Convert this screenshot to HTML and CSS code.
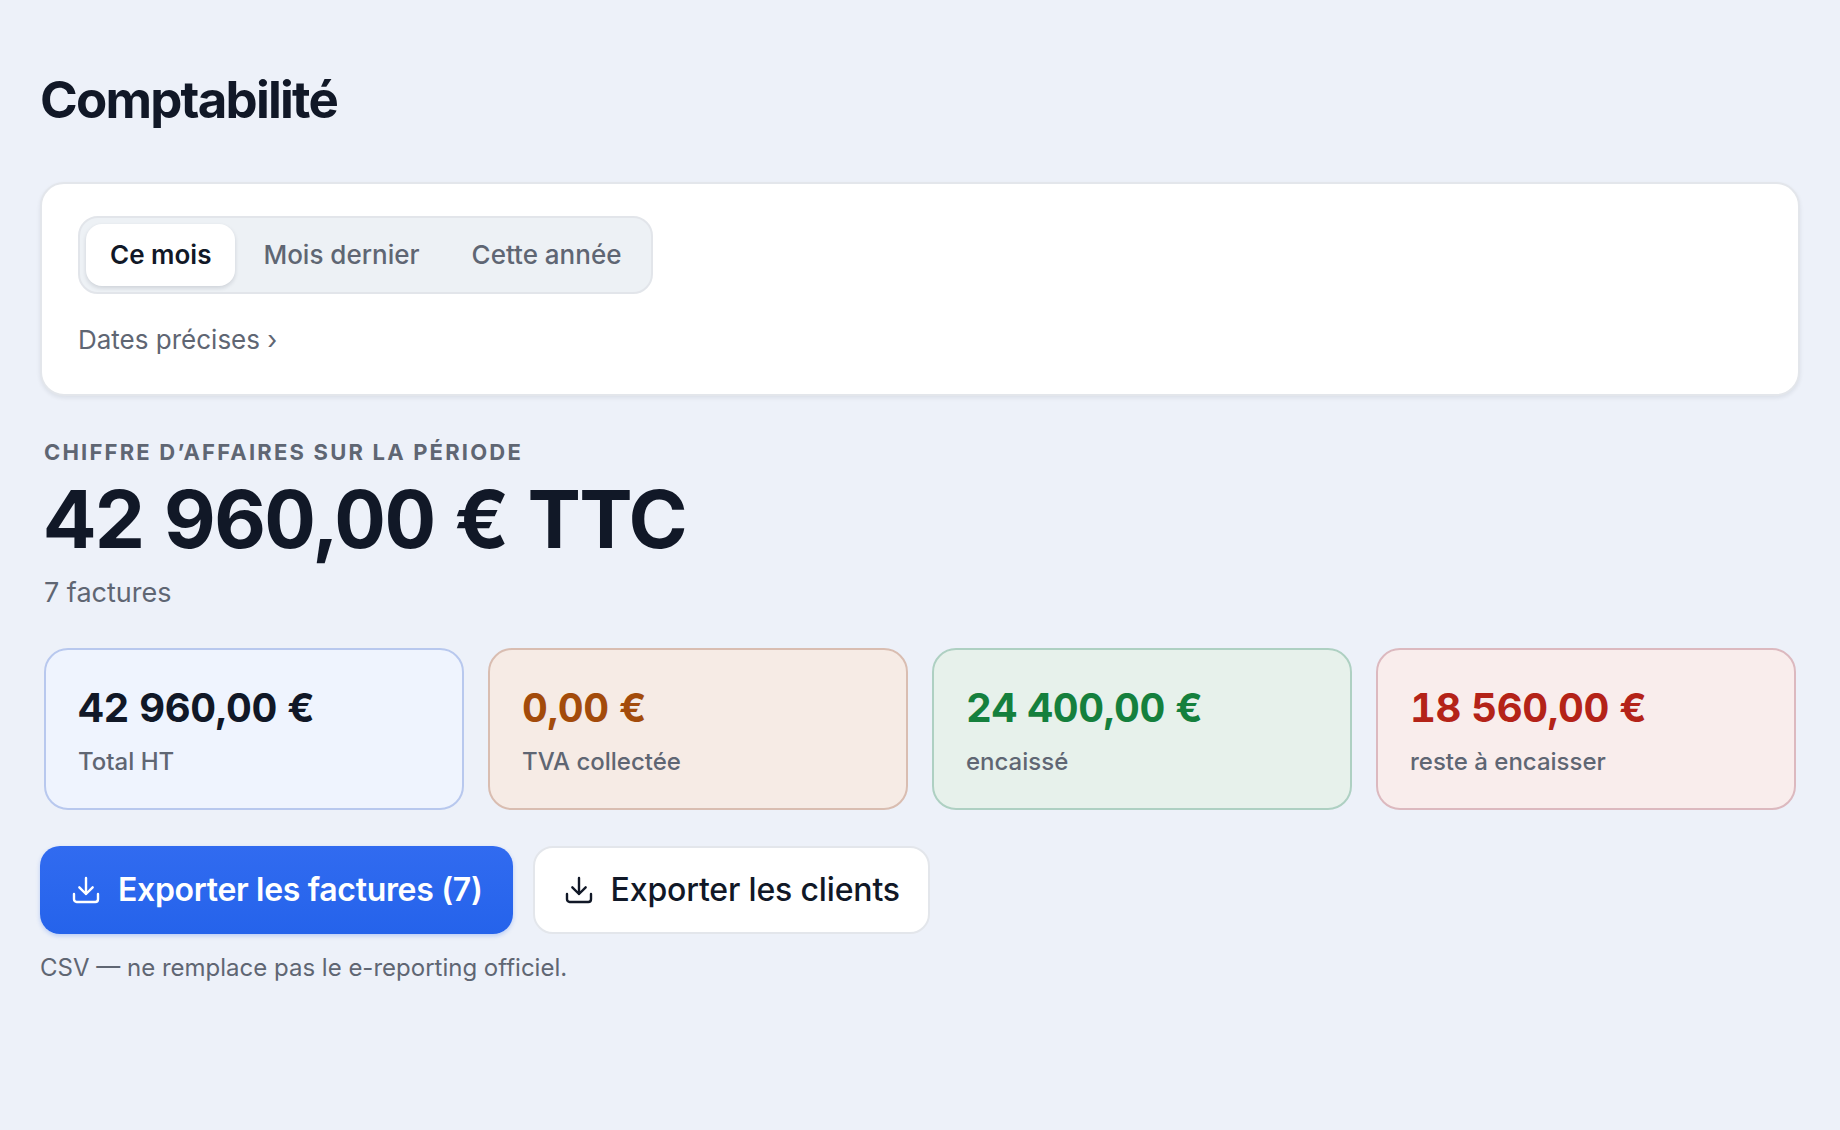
FILE: index.html
```html
<!DOCTYPE html>
<html lang="fr">
<head>
  <meta charset="UTF-8">
  <meta name="viewport" content="width=device-width, initial-scale=1">
  <title>Comptabilité</title>
  <link rel="stylesheet" href="styles.css">
</head>
<body>
  <main class="page">
    <h1>Comptabilité</h1>

    <!-- Période -->
    <section class="period-card">
      <div class="segmented">
        <button type="button" class="segment active" aria-pressed="true">Ce mois</button>
        <button type="button" class="segment" aria-pressed="false">Mois dernier</button>
        <button type="button" class="segment" aria-pressed="false">Cette année</button>
      </div>
      <button type="button" class="dates-toggle">Dates précises ›</button>
    </section>

    <!-- Chiffre d'affaires -->
    <section class="summary">
      <h2>Chiffre d’affaires sur la période</h2>
      <p class="total">42 960,00 € TTC</p>
      <p class="count">7 factures</p>
      <div class="stats">
        <div class="stat stat-ht">
          <p class="stat-value">42 960,00 €</p>
          <p class="stat-label">Total HT</p>
        </div>
        <div class="stat stat-tva">
          <p class="stat-value">0,00 €</p>
          <p class="stat-label">TVA collectée</p>
        </div>
        <div class="stat stat-paid">
          <p class="stat-value">24 400,00 €</p>
          <p class="stat-label">encaissé</p>
        </div>
        <div class="stat stat-due">
          <p class="stat-value">18 560,00 €</p>
          <p class="stat-label">reste à encaisser</p>
        </div>
      </div>
    </section>

    <!-- Exports -->
    <div class="actions">
      <button type="button" class="btn btn-primary">
        <svg class="icon" viewBox="0 0 24 24" aria-hidden="true"><path d="M12 3v12M7 10l5 5 5-5M21 15v4a2 2 0 0 1-2 2H5a2 2 0 0 1-2-2v-4"/></svg>
        Exporter les factures (7)
      </button>
      <button type="button" class="btn btn-secondary">
        <svg class="icon" viewBox="0 0 24 24" aria-hidden="true"><path d="M12 3v12M7 10l5 5 5-5M21 15v4a2 2 0 0 1-2 2H5a2 2 0 0 1-2-2v-4"/></svg>
        Exporter les clients
      </button>
    </div>
    <p class="note">CSV — ne remplace pas le e-reporting officiel.</p>
  </main>
</body>
</html>
```
FILE: styles.css
```css
* {
  margin: 0;
  padding: 0;
  box-sizing: border-box;
}

body {
  font-family: Inter, sans-serif;
  color: #111827;
  background: #edf1f9;
}

button {
  font: inherit;
  cursor: pointer;
}

.page {
  padding: 68px 40px;
}

h1 {
  font-size: 51px;
  line-height: 64px;
  font-weight: 700;
  letter-spacing: -0.035em;
  margin-bottom: 50px;
}

/* Période */
.period-card {
  display: flex;
  flex-direction: column;
  align-items: flex-start;
  gap: 26px;
  padding: 32px 36px 34px;
  background: #fff;
  border: 2px solid #e3e6eb;
  border-radius: 24px;
  box-shadow: 0 2px 4px rgba(17, 24, 39, 0.08);
}

.segmented {
  display: flex;
  gap: 4px;
  padding: 6px;
  background: #edf1f5;
  border: 2px solid #e2e5ea;
  border-radius: 20px;
}

.segment {
  padding: 16px 24px;
  font-size: 26px;
  line-height: 30px;
  font-weight: 500;
  color: #5f6673;
  background: none;
  border: none;
  border-radius: 16px;
}

.segment.active {
  font-weight: 600;
  color: #111827;
  background: #fff;
  box-shadow: 0 2px 4px rgba(17, 24, 39, 0.14);
}

.dates-toggle {
  font-size: 26px;
  line-height: 40px;
  color: #5f6673;
  background: none;
  border: none;
}

/* Chiffre d'affaires */
.summary {
  padding: 40px 4px 36px;
}

h2 {
  font-size: 22px;
  line-height: 32px;
  font-weight: 700;
  letter-spacing: 0.1em;
  text-transform: uppercase;
  color: #5f6673;
}

.total {
  margin: 7px 0 10px;
  font-size: 80px;
  line-height: 88px;
  font-weight: 700;
  letter-spacing: -0.02em;
  font-variant-numeric: tabular-nums;
}

.count {
  font-size: 27px;
  line-height: 40px;
  color: #5f6673;
}

.stats {
  display: grid;
  grid-template-columns: repeat(4, 1fr);
  gap: 24px;
  margin-top: 35px;
}

.stat {
  padding: 32px 32px 26px;
  border: 2px solid;
  border-radius: 24px;
}

.stat-value {
  margin-bottom: 8px;
  font-size: 40px;
  line-height: 52px;
  font-weight: 700;
  letter-spacing: -0.01em;
  font-variant-numeric: tabular-nums;
}

.stat-label {
  font-size: 24px;
  line-height: 40px;
  font-weight: 500;
  color: #5f6673;
}

.stat-ht {
  background: #eff4fe;
  border-color: #b8c8ee;
}

.stat-tva {
  background: #f6ebe5;
  border-color: #d9bdb1;
}

.stat-tva .stat-value {
  color: #a34b0b;
}

.stat-paid {
  background: #e7f1eb;
  border-color: #aed0c2;
}

.stat-paid .stat-value {
  color: #15803d;
}

.stat-due {
  background: #f9edec;
  border-color: #dcb9bf;
}

.stat-due .stat-value {
  color: #b42318;
}

/* Exports */
.actions {
  display: flex;
  gap: 20px;
}

.btn {
  display: flex;
  align-items: center;
  gap: 16px;
  padding: 24px 28px;
  font-size: 32px;
  line-height: 36px;
  font-weight: 500;
  letter-spacing: -0.005em;
  border: 2px solid;
  border-radius: 20px;
}

.btn-primary {
  color: #fff;
  font-weight: 600;
  letter-spacing: -0.01em;
  background: linear-gradient(#316bf0, #2563eb) border-box;
  border-color: transparent;
  box-shadow: 0 2px 4px rgba(37, 99, 235, 0.25);
}

.btn-secondary {
  color: #111827;
  background: #fff;
  border-color: #e3e6eb;
}

.icon {
  width: 32px;
  height: 32px;
  fill: none;
  stroke: currentColor;
  stroke-width: 1.8;
  stroke-linecap: round;
  stroke-linejoin: round;
}

.note {
  margin-top: 16px;
  font-size: 24px;
  line-height: 36px;
  color: #5f6673;
}
```
